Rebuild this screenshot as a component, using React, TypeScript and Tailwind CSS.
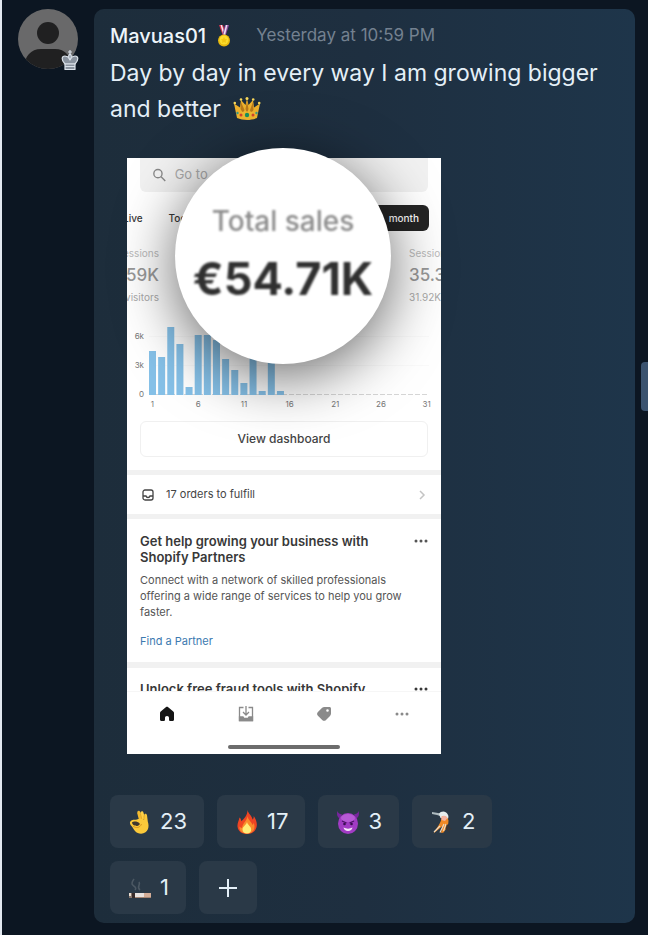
import { ReactNode } from "react";

const bars = [44, 38, 68, 51, 8, 60, 60, 55, 36, 25, 12, 37, 4, 35, 4];
const days = [1, 6, 11, 16, 21, 26, 31];

function Medal() {
  return (
    <svg className="h-6 w-5 shrink-0" viewBox="0 0 20 24">
      <path d="M5 1h4l3 9-3 2z" fill="#d8344f" />
      <path d="M6.500 1h1.500l3 9-1.500 1z" fill="#f2e6ee" />
      <path d="M15 1h-4L8.500 10l3 2z" fill="#8d4a9b" />
      <path d="M13.500 1H12L9.500 10l1.500 1z" fill="#e9dff0" />
      <circle cx="10" cy="16.500" r="6" fill="#e8b90e" />
      <circle cx="10" cy="16" r="4.500" fill="#fbdc2c" />
      <path d="M10 13l1 2 2.200.300-1.600 1.500.400 2.200-2-1-2 1 .400-2.200-1.600-1.500L9 15z" fill="#f3c613" />
    </svg>
  );
}

function Crown() {
  return (
    <svg className="h-7 w-7" viewBox="0 0 28 28">
      <path d="M4 23L1 8.500l6 4L8 5l4.500 5L14 3.500 15.500 10 20 5l1 7.500 6-4L24 23c-6 2.500-14 2.500-20 0z" fill="#efb22d" />
      <path d="M7.500 14L8 7l3.500 8-1.500 3zM14 6l1.500 8-1.500 4-1.500-4zM20 7l.500 8-2.500 3-1-3z" fill="#b9791b" />
      <path d="M4 18c6-2 14-2 20 0l-.500 4.500c-6 2-13 2-19 0z" fill="#f0b930" />
      <g fill="#f9d85b">
        <circle cx="1.800" cy="8" r="1.300" />
        <circle cx="8" cy="4.500" r="1.300" />
        <circle cx="14" cy="3.500" r="1.500" />
        <circle cx="20.200" cy="4.500" r="1.300" />
        <circle cx="26.200" cy="8" r="1.300" />
      </g>
      <circle cx="14" cy="20" r="2.200" fill="#19915e" />
      <circle cx="8" cy="20" r="1.500" fill="#d7432c" />
      <circle cx="20" cy="20" r="1.500" fill="#d7432c" />
      <circle cx="4.500" cy="18" r="1.200" fill="#3a9c86" />
      <circle cx="23.500" cy="18" r="1.200" fill="#3a9c86" />
    </svg>
  );
}

function OkHand() {
  return (
    <svg className="size-6" viewBox="0 0 24 24">
      <path d="M11 10L9.300 3.500C8.800.500 11.200-.300 12.200 2l3 8z" fill="#f4bb30" />
      <path d="M13.500 9l-1-5.500c-.300-2.500 2.400-3 3-.800l2 7z" fill="#ffd045" />
      <path d="M16 9.500l.200-4.500c.300-2 2.600-1.700 2.800.200l.800 6.300c1.500 4.500.700 8.500-2.300 10.800-3 2.200-8 1.700-10.500-1.300-1.500-1.800-2-3.500-3.500-5-1.300-1.300-2-3-1.300-4.300C3.200 9.700 5.500 9.500 8 9.700l4-1.200z" fill="#fbc93a" />
      <path d="M4 12.500c1.500-1.500 5.500-1.300 7.500.700.800 1-.500 2.500-2.200 2.700-2.300.300-5.300-1.400-5.300-3.400z" fill="#40382e" />
      <path d="M5 16c3 2.500 7 2 8.500-2" fill="none" stroke="#d89620" strokeWidth="1" />
      <path d="M12.500 4l1.300 5M16 5.500v4" stroke="#d99d22" strokeWidth=".7" />
    </svg>
  );
}

function Fire() {
  return (
    <svg className="size-6" viewBox="0 0 24 24">
      <path d="M12.500 0c.800 4 4.500 5.500 5 9.500 1-.700 1.300-2 1.200-3.500 3 4 4.300 9.500 2 13.200-1.800 3.500-5.500 4.800-8.700 4.800-4.800 0-9-2.500-9.500-7.500C2.200 13 4 10.500 4.500 7.500c1.300 1 1.700 2.300 1.800 3.800C9.500 8.500 12.500 5 12.500 0z" fill="#ef4423" />
      <path d="M12.500 6c.500 4 4.500 6 5 9 .800-.500 1-1.500 1-2.500 2.500 5 .500 11-6.500 11-5.500 0-8-3-7.500-7 .700.800 1.400 1.300 2.500 1.500C7.500 13 12 11 12.500 6z" fill="#fb8a2a" />
      <path d="M12 12c.500 3 4.200 4.200 4.200 7.500 0 2.500-1.800 4-4.200 4s-4.500-1.500-4.500-4C7.500 16.500 11 15.500 12 12z" fill="#ffec78" />
    </svg>
  );
}

function Imp() {
  return (
    <svg className="size-6" viewBox="0 0 24 24">
      <path d="M1.500 1C2 3.500 4 4 6 4.500L3.500 8.500C1 7 .500 3.500 1.500 1zM22.500 1C22 3.500 20 4 18 4.500l2.500 4C23 7 23.500 3.500 22.500 1z" fill="#79259f" />
      <ellipse cx="12" cy="13.500" rx="10" ry="10.500" fill="#a13bc4" />
      <ellipse cx="12" cy="8" rx="7" ry="4" fill="#b65ad5" />
      <path d="M6 11l4.500 2M18 11l-4.500 2" stroke="#4d1468" strokeWidth="1.300" />
      <circle cx="8.500" cy="14" r="1.300" fill="#3a0d52" />
      <circle cx="15.500" cy="14" r="1.300" fill="#3a0d52" />
      <path d="M7.500 17.500c2.500 1.500 6.500 1.500 9 0-.500 2.300-2 3.500-4.500 3.500s-4-1.200-4.500-3.500z" fill="#f3e6f8" />
    </svg>
  );
}

function Bird() {
  return (
    <svg className="size-6" viewBox="0 0 24 24">
      <path d="M2 2l9 1.500-1 2.500-3-1-5-1z" fill="#aebbc0" />
      <path d="M9 4c2-3.500 7-3 8.500 0 1.500 2 1 4 0 6l-7-2z" fill="#e7eded" />
      <path d="M12 6c3-.500 6 1 6.500 4.500.300 4-2 8-5 12L11 23l1.500-7-9 7.500 5-8c2-3 3-6 3.500-9.500z" fill="#f08a25" />
      <path d="M11.500 6.500c2-1.500 5-1 6 1.500l-2.500 3-3.500-1z" fill="#f5b29f" />
      <path d="M10 16l-6 6M14 14l-4 8.500M16 14l-2.500 7" stroke="#ecdcc6" strokeWidth="1.200" />
      <path d="M17 14l5 6-3-1 .500 3.500-4-4z" fill="#3a3634" />
    </svg>
  );
}

function Cigarette() {
  return (
    <svg className="size-6" viewBox="0 0 24 24">
      <path d="M7 14c3-3-4-4-3-7 .500-2 1-2.500 2-4M12 14c-4-3 1-5-1-8" fill="none" stroke="#6d7780" strokeWidth="1.600" opacity=".5" />
      <path d="M1 17h6v5H1z" fill="#85756b" />
      <path d="M1 17h2v3H1z" fill="#e9dcd0" />
      <path d="M4 17h3v5H4z" fill="#382b29" />
      <path d="M7 17h10v5H7z" fill="#e8e2df" />
      <path d="M16 17h7v5h-7z" fill="#d3ad98" />
      <path d="M7 21h16v1H7z" fill="#a48573" />
    </svg>
  );
}

function Dots({ className }: { className: string }) {
  return (
    <svg className={className} viewBox="0 0 14 4" fill="currentColor">
      <circle cx="2" cy="2" r="1.500" />
      <circle cx="7" cy="2" r="1.500" />
      <circle cx="12" cy="2" r="1.500" />
    </svg>
  );
}

function Avatar() {
  return (
    <div className="relative size-[60px] shrink-0">
      <svg className="size-full" viewBox="0 0 60 60">
        <clipPath id="avatar">
          <circle cx="30" cy="30" r="30" />
        </clipPath>
        <g clipPath="url(#avatar)">
          <rect width="60" height="60" fill="#69696a" />
          <circle cx="30" cy="24" r="11" fill="#202021" />
          <path d="M6 60c0-13 7-20 17-20h14c10 0 17 7 17 20z" fill="#202021" />
        </g>
      </svg>
      <svg className="absolute -right-px -bottom-[2px] h-[22px] w-[18px]" viewBox="0 0 18 22" fill="#8a939f" stroke="#dbe2ea" strokeWidth="1.200" strokeLinejoin="round">
        <path d="M9 1v5M7 3h4" />
        <path d="M4 15C0 11 .500 7 4 7c2 0 3 .500 5 3 2-2.500 3-3 5-3 3.500 0 4 4 0 8z" />
        <path d="M9 5c2 1.500 2 3 0 6-2-3-2-4.500 0-6zM4 15h10v5.500H4zM4 17.500h10" />
      </svg>
    </div>
  );
}

function Chart() {
  return (
    <svg className="block h-[86px] w-full font-[Inter,sans-serif] text-[8px]" viewBox="0 0 314 86" fill="#777">
      <path d="M22 13.500h280M22 42.500h280" stroke="#000" strokeOpacity=".02" />
      <path d="M22 71.500h280" stroke="#999" strokeOpacity=".4" strokeDasharray="5 2" />
      <text x="17" y="16" textAnchor="end">6k</text>
      <text x="17" y="45" textAnchor="end">3k</text>
      <text x="17" y="74" textAnchor="end">0</text>
      {bars.map((h, i) => (
        <rect key={i} x={22 + i * 9.14} y={72 - h} width="7" height={h} fill="#86c1e8" />
      ))}
      {days.map((d, i) => (
        <text key={d} x={25.500 + i * 45.700} y="84" textAnchor="middle">{d}</text>
      ))}
    </svg>
  );
}

function Stat({ label, value, note }: { label: string; value: string; note: string }) {
  return (
    <div className="flex w-8 flex-col whitespace-nowrap text-[#999] first:items-end">
      <span className="text-[10px] leading-4 text-[#bbb]">{label}</span>
      <span className="text-[17px] leading-7 font-medium">{value}</span>
      <span className="text-[10px] leading-4 text-[#aaa]">{note}</span>
    </div>
  );
}

function Screenshot() {
  return (
    <div className="relative w-[314px] max-w-full text-[#383838]">
      <div className="overflow-hidden bg-white">
        <div className="mx-[13px] flex h-[34px] items-center gap-2 rounded-b-md bg-[#f1f1f1] px-3 text-[#8a8a8a]">
          <svg className="size-4" viewBox="0 0 16 16" fill="none" stroke="#888" strokeWidth="1.500">
            <circle cx="6.500" cy="6.500" r="4.500" />
            <path d="M10 10l4.500 4.500" />
          </svg>
          <input className="w-full min-w-0 bg-transparent text-[13px] outline-none placeholder:text-[#aaa]" placeholder="Go to" aria-label="Go to" />
        </div>
        <div className="mt-[13px] -ml-1 flex h-[26px] items-center justify-between pr-3 text-[10px] font-medium">
          <div className="flex gap-[26px]">
            <button>Live</button>
            <button>Today</button>
          </div>
          <button className="h-full rounded-md bg-[#252525] pr-[10px] pl-8 text-white">month</button>
        </div>
        <div className="mt-[14px] flex justify-between">
          <Stat label="Sessions" value="59K" note="visitors" />
          <Stat label="Sessions" value="35.3" note="31.92K" />
        </div>
        <div className="mt-[18px]">
          <Chart />
        </div>
        <div className="px-[13px] pt-3 pb-[13px]">
          <button className="h-9 w-full rounded-md border border-[#f0f0f0] text-xs font-medium text-[#444]">View dashboard</button>
        </div>
        <div className="flex h-[49px] items-center border-y-[5px] border-[#f1f1f1] px-[15px]">
          <svg className="size-3" viewBox="0 0 12 12" fill="none" stroke="#444" strokeWidth="1.300">
            <rect x="1" y="1" width="10" height="10" rx="2" />
            <path d="M1 7h3c.500 2 3.500 2 4 0h3" />
          </svg>
          <a href="#orders" className="ml-3 grow text-[11px] text-[#444]">17 orders to fulfill</a>
          <svg className="h-[10px] w-2" viewBox="0 0 8 10" fill="none" stroke="#c4c4c4" strokeWidth="1.500">
            <path d="M2 1l4 4-4 4" />
          </svg>
        </div>
        <div className="px-[13px] pt-[14px] pb-[13px] text-[11px] leading-4 text-[#555]">
          <div className="flex justify-between">
            <h3 className="text-[13px] font-semibold text-[#383838]">
              Get help growing your business with
              <br />
              Shopify Partners
            </h3>
            <Dots className="mt-[6px] h-1 w-[14px] shrink-0" />
          </div>
          <p className="mt-[7px]">
            Connect with a network of skilled professionals
            <br />
            offering a wide range of services to help you grow
            <br />
            faster.
          </p>
          <a href="#partners" className="mt-[13px] block text-[#3d7ab0]">Find a Partner</a>
        </div>
        <div className="flex h-[29px] justify-between overflow-hidden border-t-[6px] border-[#f1f1f1] px-[13px] pt-[13px]">
          <h3 className="text-[13px] leading-4 font-semibold whitespace-nowrap">Unlock free fraud tools with Shopify</h3>
          <Dots className="mt-[6px] h-1 w-[14px] shrink-0" />
        </div>
        <nav className="flex items-start justify-between border-t border-[#f6f6f6] px-8 pt-[14px] text-[#8a8a8a]">
          <svg className="size-4" viewBox="0 0 16 16" fill="#151515">
            <path d="M1 7c0-.800.300-1.200 1-1.800L6.800 1.300c.800-.600 1.600-.600 2.400 0L14 5.200c.700.600 1 1 1 1.800v6.500c0 .900-.500 1.500-1.500 1.500h-2c-.900 0-1.500-.500-1.500-1.500V12c0-1.200-.700-2-2-2s-2 .800-2 2v1.500c0 1-.600 1.500-1.500 1.500h-2C1.500 15 1 14.400 1 13.500z" />
          </svg>
          <svg className="size-4" viewBox="0 0 16 16" fill="none" stroke="currentColor" strokeWidth="1.300">
            <path d="M5.500 1.500h-4v13h13v-13h-4" />
            <path d="M1.500 11H5l1 1.500h4l1-1.500h3.500v3.500h-13z" fill="currentColor" />
            <path d="M8 0v9M5 6l3 3 3-3" />
          </svg>
          <svg className="size-4" viewBox="0 0 16 16" fill="currentColor">
            <path fillRule="evenodd" d="M8.500 1h4.800C14.400 1 15 1.600 15 2.700v4.800c0 1-.300 1.700-1 2.400l-4 4c-1.100 1.200-2.600 1.200-3.800 0L1.900 9.700c-1.100-1.200-1.100-2.600 0-3.800l4-4C6.600 1.300 7.500 1 8.500 1zm3 2.200a1.300 1.300 0 100 2.600 1.300 1.300 0 000-2.600z" />
          </svg>
          <Dots className="mt-[6px] h-1 w-[14px]" />
        </nav>
        <div className="mx-auto mt-[23px] mb-[5px] h-1 w-28 rounded-full bg-[#6c6c6c]" />
      </div>
      <div className="absolute -top-[10px] left-12 flex size-[216px] flex-col items-center rounded-full bg-white pt-[53px] shadow-[0_12px_60px_rgba(0,0,0,0.6)]">
        <span className="text-[28px] leading-10 font-medium text-[#8c8c8c] blur-[1px]">Total sales</span>
        <span className="mt-2 text-[45px] leading-[60px] font-bold text-[#303030] blur-[1px]">€54.71K</span>
      </div>
    </div>
  );
}

function Reaction({ children, count }: { children: ReactNode; count: number }) {
  return (
    <button className="flex h-[53px] items-center gap-2 rounded-lg bg-[#2a3947] pr-[17px] pl-[18px] text-[22px]">
      {children}
      {count}
    </button>
  );
}

export default function App() {
  return (
    <main className="relative flex min-h-screen items-start border-l-2 border-slate-200 bg-[#0c1622] py-[9px] pr-[13px] pl-4 font-[Inter,'Liberation_Sans',sans-serif] text-[#e4eff7]">
      <Avatar />
      <article className="ml-4 min-w-0 grow rounded-[10px] bg-linear-to-r from-[#1d2d3b] via-[#1e2f40] to-[#1e354a] px-4 pt-[13px] pb-[9px]">
        <header className="flex h-7 items-center">
          <h2 className="text-[20px] font-medium text-[#eef5fa]">Mavuas01</h2>
          <span className="ml-2">
            <Medal />
          </span>
          <time className="ml-[22px] text-[17px] text-[#748190]">Yesterday at 10:59 PM</time>
        </header>
        <p className="mt-[5px] text-[23px] leading-9">
          Day by day in every way I am growing bigger
          <br />
          <span className="flex items-center gap-3">
            and better <Crown />
          </span>
        </p>
        <div className="mt-[31px] ml-[17px]">
          <Screenshot />
        </div>
        <div className="mt-[41px] flex max-w-md flex-wrap gap-[13px]">
          <Reaction count={23}><OkHand /></Reaction>
          <Reaction count={17}><Fire /></Reaction>
          <Reaction count={3}><Imp /></Reaction>
          <Reaction count={2}><Bird /></Reaction>
          <Reaction count={1}><Cigarette /></Reaction>
          <button className="flex h-[53px] w-[58px] items-center justify-center rounded-lg bg-[#2a3947]" aria-label="Add reaction">
            <svg className="size-5" viewBox="0 0 20 20" stroke="currentColor" strokeWidth="2">
              <path d="M10 1v18M1 10h18" />
            </svg>
          </button>
        </div>
      </article>
      <div className="absolute top-[362px] right-0 h-[49px] w-[7px] rounded-l-sm bg-[#3b536f]" />
    </main>
  );
}
